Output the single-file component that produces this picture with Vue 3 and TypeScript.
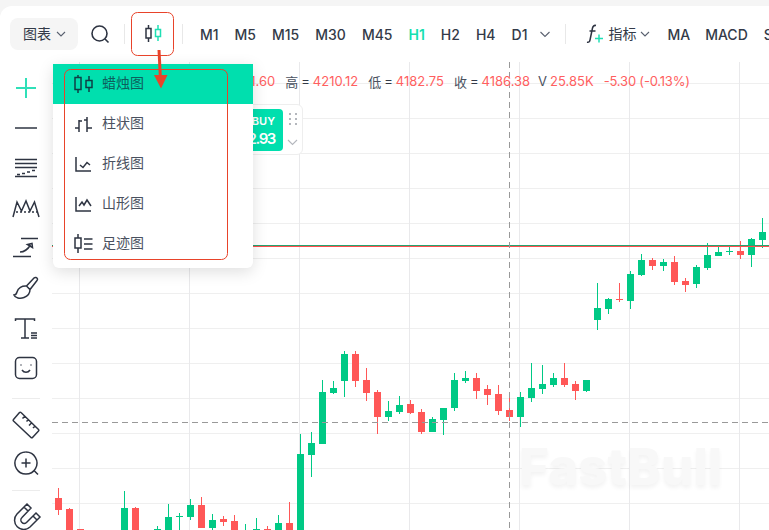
<script setup lang="ts">
type Candle = [number, 'g' | 'r', number, number, number, number]

const candles: Candle[] = [
  [58, 'r', 488, 498, 510, 515], [69, 'r', 508, 509, 531, 531], [80, 'r', 529, 529, 531, 531],
  [124, 'g', 491, 508, 531, 531], [135, 'r', 507, 508, 531, 531], [157, 'g', 526, 529, 531, 531],
  [168, 'g', 504, 517, 531, 531], [179, 'g', 513, 516, 517, 531], [190, 'g', 499, 505, 517, 520],
  [201, 'r', 497, 505, 528, 528], [212, 'g', 514, 520, 528, 531], [223, 'r', 516, 519, 522, 526],
  [234, 'r', 515, 521, 531, 531], [245, 'g', 524, 530, 531, 531], [256, 'g', 518, 529, 531, 531],
  [267, 'r', 526, 529, 531, 531], [278, 'g', 515, 523, 531, 531], [289, 'r', 502, 523, 531, 531],
  [300, 'g', 434, 454, 531, 531], [311, 'g', 432, 443, 455, 477], [322, 'g', 380, 392, 444, 444],
  [333, 'g', 381, 388, 393, 394], [344, 'g', 351, 354, 381, 397], [355, 'r', 351, 354, 381, 387],
  [366, 'r', 368, 380, 393, 401], [377, 'r', 390, 392, 417, 434], [388, 'g', 401, 411, 417, 421],
  [399, 'g', 396, 405, 412, 414], [410, 'r', 400, 404, 413, 414], [421, 'r', 409, 412, 432, 434],
  [432, 'g', 417, 419, 432, 432], [443, 'g', 408, 408, 420, 435], [454, 'g', 373, 380, 408, 411],
  [465, 'g', 371, 378, 381, 383], [476, 'r', 373, 378, 391, 399], [487, 'r', 385, 389, 395, 405],
  [498, 'r', 385, 394, 411, 415], [509, 'r', 392, 410, 417, 421], [520, 'g', 392, 397, 417, 427],
  [531, 'g', 363, 388, 398, 402], [542, 'g', 365, 384, 389, 394], [553, 'g', 373, 378, 385, 387],
  [564, 'r', 363, 378, 385, 387], [575, 'r', 381, 384, 391, 400], [586, 'g', 380, 380, 391, 392],
  [597, 'g', 283, 308, 320, 330], [608, 'g', 298, 299, 309, 314], [619, 'r', 283, 299, 300, 302],
  [630, 'g', 271, 274, 301, 309], [641, 'g', 254, 260, 275, 276], [652, 'r', 258, 260, 266, 270],
  [663, 'g', 259, 262, 266, 271], [674, 'r', 256, 262, 282, 285], [685, 'r', 278, 281, 285, 292],
  [696, 'g', 265, 267, 284, 288], [707, 'g', 243, 255, 268, 270], [718, 'g', 246, 252, 256, 256],
  [729, 'g', 247, 251, 252, 255], [740, 'r', 241, 251, 255, 259], [751, 'g', 238, 239, 255, 267],
  [762, 'g', 218, 232, 240, 248],
]

const hLines = [83, 118, 153, 188, 223, 258, 293, 328, 363, 398, 433, 468, 503]
const vLines = [79, 189, 299, 409, 519, 629, 739]

const periods = ['M1', 'M5', 'M15', 'M30', 'M45', 'H1', 'H2', 'H4', 'D1']
const active = 'H1'

const toolsA = [
  { key: 'line', d: 'M15 20H37' },
  { key: 'channel', d: 'M15 11.5H37M15 15.5H37M15 19.5H37M15 28.5H37M17 26.5H20M22 25.5H25M27 24H30M32 22.5H35' },
  { key: 'peak', d: 'M13 29L17 14L21.500 23L26 13L30 23L34.500 14L39 29M16 24H18M20 24H22M24 24H26M28 24H30M32 24H34M36 24H37' },
  { key: 'arrow', d: 'M21 10.5H38M13 28.5H31M20 24C25 24 28 21 30.500 17M27.500 16.500L32 15.500L32.500 19.500Z' },
  { key: 'brush', d: 'M36 9.5C37.5 10 38 11.5 37 12.5L30 21.5L26.5 18L34 10C34.5 9.5 35.2 9.3 36 9.5ZM26.5 18C22 17.5 18 20 17 24C16.5 26 15 27 14 27C15 30 20 31 24 29.5C28 28 30 25 30 21.5' },
  { key: 'text', d: 'M15.5 13V11H34.5V13M25 11V30M21 30H29M31 25H37M31 27.5H37M31 30H37' },
  { key: 'face', d: 'M19.5 9.5H32.5A4 4 0 0 1 36.5 13.5V26.5A4 4 0 0 1 32.5 30.5H19.5A4 4 0 0 1 15.5 26.5V13.5A4 4 0 0 1 19.5 9.5ZM21 16.5V17.5M31 16.5V17.5M22 22C24 25 28 25 30 22' },
]
const toolsB = [
  { key: 'ruler', d: 'M21 9.500L38.500 26.500A1 1 0 0 1 38.500 28L32.500 34.500A1 1 0 0 1 31 34.500L13.500 18A1 1 0 0 1 13.500 16.500L19.500 9.500A1 1 0 0 1 21 9.500ZM25 13L22.500 15.500M28.500 16.500L26.500 18.500M32 19.500L29 22.500M35 23L33 25' },
  { key: 'zoom', d: 'M26 9A11 11 0 1 1 25.9 9M34.500 28L38 31.500M21.500 20H30.500M26 15.500V24.500' },
]
const magnet = 'M27 7L17 17A9.200 9.200 0 0 0 30 30L40 20L36 16L26.500 25.500A3.200 3.200 0 0 1 22 20.500L31 11ZM24 10L28 14M37 23L33 19'

const menu = ['蜡烛图', '柱状图', '折线图', '山形图', '足迹图']
</script>

<template>
  <div class="page">
    <header class="toolbar">
      <button class="chart-select">
        <span>图表</span>
        <svg class="chev" width="10" height="6" viewBox="0 0 10 6"><path d="M1 1L5 5L9 1" /></svg>
      </button>
      <svg class="search" width="20" height="20" viewBox="0 0 20 20">
        <circle cx="9.5" cy="9.5" r="7.5" />
        <path d="M15 15L18.5 18.5" />
      </svg>
      <i class="sep sep-a"></i>
      <svg class="candle-switch" width="20" height="20" viewBox="0 0 20 20">
        <path class="dark" d="M4.500 1V4.500M4.500 14V18M2 4.500H7V14H2Z" />
        <path class="teal" d="M14 1V5.500M14 12.500V17M11.500 5.500H16.500V12.500H11.500Z" />
      </svg>
      <i class="sep sep-b"></i>
      <nav class="periods">
        <span v-for="p in periods" :key="p" :class="['period', { on: p === active }]">{{ p }}</span>
      </nav>
      <svg class="chev more" width="12" height="7" viewBox="0 0 12 7"><path d="M1.5 1L6 5.5L10.5 1" /></svg>
      <i class="sep sep-c"></i>
      <svg class="fx" width="18" height="22" viewBox="0 0 18 22">
        <path class="dark" d="M10 2.5C8 2 7 3 6.5 5L4 17C3.6 19 2.6 19.6 1 19.2M3.5 8H9.5" />
        <path class="teal" d="M9 15.5H17M13 11.5V19.5" />
      </svg>
      <span class="indicator">指标</span>
      <svg class="chev" width="10" height="6" viewBox="0 0 10 6"><path d="M1 1L5 5L9 1" /></svg>
      <span class="period ma">MA</span>
      <span class="period macd">MACD</span>
      <span class="period sar">SAR</span>
    </header>

    <main class="body">
      <aside class="side">
        <button class="tool">
          <svg width="52" height="40" viewBox="0 0 52 40"><path class="plus" d="M16 20H36M26 10V30" /></svg>
        </button>
        <button v-for="t in toolsA" :key="t.key" class="tool">
          <svg width="52" height="40" viewBox="0 0 52 40"><path :d="t.d" /></svg>
        </button>
        <i class="side-sep first"></i>
        <button v-for="t in toolsB" :key="t.key" class="tool">
          <svg width="52" height="40" viewBox="0 0 52 40"><path :d="t.d" /></svg>
        </button>
        <i class="side-sep second"></i>
        <button class="tool">
          <svg width="52" height="40" viewBox="0 0 52 40"><path :d="magnet" /></svg>
        </button>
      </aside>

      <section class="chart">
        <svg class="plot" width="717" height="468" viewBox="52 62 717 468">
          <rect v-for="y in hLines" :key="'h' + y" x="52" :y="y" width="717" height="1" fill="#efefef" />
          <rect v-for="x in vLines" :key="'v' + x" :x="x" y="62" width="1" height="468" fill="#e9e9eb" />
          <g v-for="c in candles" :key="c[0]" :fill="c[1] === 'g' ? '#00c985' : '#ff5757'">
            <rect :x="c[0]" :y="c[2]" width="1" :height="c[5] - c[2]" />
            <rect :x="c[0] - 3" :y="c[3]" width="7" :height="c[4] - c[3]" />
          </g>
          <rect x="52" y="245" width="717" height="1" fill="#25a36f" />
          <rect x="52" y="246" width="717" height="1" fill="#ff4d4d" />
          <path d="M52 422.5H769" stroke="#999" stroke-dasharray="6 4" fill="none" />
          <path d="M509.5 62V530" stroke="#999" stroke-dasharray="6 4" fill="none" />
        </svg>

        <div class="watermark">FastBull</div>

        <div class="info">
          <span class="k">开</span><span class="eq">=</span><span class="v">4211.60</span>
          <span class="k gap">高</span><span class="eq">=</span><span class="v">4210.12</span>
          <span class="k gap">低</span><span class="eq">=</span><span class="v">4182.75</span>
          <span class="k gap">收</span><span class="eq">=</span><span class="v">4186.38</span>
          <span class="k vee">V</span><span class="v vol">25.85K</span>
          <span class="v tight">-5.30 (-0.13%)</span>
        </div>

        <div class="trade">
          <div class="buy">
            <span class="buy-l">BUY</span>
            <span class="buy-p">4182.93</span>
          </div>
          <div class="trade-ctl">
            <svg width="10" height="14" viewBox="0 0 10 14" fill="#b4b7bd">
              <rect x="1" y="1" width="2" height="2" /><rect x="7" y="1" width="2" height="2" />
              <rect x="1" y="6" width="2" height="2" /><rect x="7" y="6" width="2" height="2" />
              <rect x="1" y="11" width="2" height="2" /><rect x="7" y="11" width="2" height="2" />
            </svg>
            <svg class="chev pale" width="11" height="7" viewBox="0 0 11 7"><path d="M1 1L5.5 5.5L10 1" /></svg>
          </div>
        </div>

        <ul class="menu">
          <li v-for="(m, i) in menu" :key="m" :class="['menu-item', { sel: i === 0 }]">
            <svg width="20" height="20" viewBox="0 0 20 20">
              <path v-if="i === 0" d="M5 1V3.500M5 15.500V19M2 3.500H8V15.500H2ZM16 2V6.500M16 13.500V18M13 6.500H19V13.500H13Z" />
              <path v-else-if="i === 1" d="M6 6V18M2 14H6M6 7H9M14 3V18M11 6H14M14 14H19" />
              <path v-else-if="i === 2" d="M3 3V17H18M7 11L10 13.500L14 8.500L17 11" />
              <path v-else-if="i === 3" d="M3 3V17H18M6 12L9 8L11 11L14 6L18 12" />
              <path v-else d="M5 0V4M5 14V19M2 4H8V14H2ZM11 5H19.500M11 10H19.500M11 15H19.500" />
            </svg>
            <span>{{ m }}</span>
          </li>
        </ul>
      </section>
    </main>

    <svg class="notes" width="769" height="530" viewBox="0 0 769 530">
      <rect x="131.5" y="12.5" width="42" height="43" rx="6" />
      <rect x="64.5" y="69.5" width="163" height="190" rx="6" />
      <path class="shaft" d="M159 50L160.500 80" />
      <path class="head" d="M154 75L167.500 75L161 88.500Z" />
    </svg>
  </div>
</template>

<style>
html, body { margin: 0; background: #f5f5f5; }
</style>

<style scoped>
.page {
  position: relative;
  width: 769px;
  height: 530px;
  overflow: hidden;
  padding-top: 6px;
  box-sizing: border-box;
  font-family: Inter, "Noto Sans CJK SC", sans-serif;
  color: #333a48;
}
button { all: unset; box-sizing: border-box; }
svg { display: block; flex: none; }
svg path, svg circle { fill: none; }

.toolbar {
  display: flex;
  align-items: center;
  height: 56px;
  padding: 0 0 0 10px;
  box-sizing: border-box;
  background: #fff;
  border-radius: 12px 0 0 0;
  overflow: hidden;
  white-space: nowrap;
}
.chart-select {
  display: flex;
  align-items: center;
  gap: 5px;
  width: 68px;
  height: 32px;
  padding-left: 13px;
  background: #f5f5f5;
  border-radius: 8px;
  font-size: 14px;
  flex: none;
}
.chart-select span { margin-bottom: 2px; }
.chev path { stroke: #5a6170; stroke-width: 1.1; }
.chev.pale path { stroke: #b4b7bd; }
.search { margin-left: 12px; }
.search circle, .search path { stroke: #2e3442; stroke-width: 1.6; }
.sep { display: block; flex: none; width: 1px; height: 20px; background: #e8e8e8; }
.sep-a { margin-left: 14px; }
.candle-switch { margin-left: 19px; }
.sep-b { margin-left: 18px; }
.dark { stroke: #2e3442; stroke-width: 1.5; }
.teal { stroke: #1fdfb4; stroke-width: 1.5; }
.periods { display: flex; gap: 16px; margin-left: 17px; flex: none; }
.period { font-size: 14px; font-weight: 500; color: #333a48; }
.period.on { color: #17dfb0; font-weight: 600; }
.more { margin-left: 12px; }
.sep-c { margin-left: 14px; }
.fx { margin-left: 20px; }
.indicator { margin-left: 4px; margin-right: 4px; margin-bottom: 2px; font-size: 14px; }
.ma { margin-left: 17px; }
.macd { margin-left: 15px; }
.sar { margin-left: 16px; }

.body { display: flex; height: 468px; background: #fff; }
.side {
  display: flex;
  flex-direction: column;
  flex: none;
  width: 52px;
  padding-top: 6px;
  box-sizing: border-box;
  overflow: hidden;
}
.tool { display: block; flex: none; height: 40px; }
.tool path { stroke: #2e3442; stroke-width: 1.5; }
.tool path.plus { stroke: #2fe0b8; stroke-width: 2; }
.side-sep { display: block; flex: none; width: 28px; height: 1px; margin-left: 12px; background: #ececec; }
.side-sep.first { margin-top: 10px; margin-bottom: 4px; }
.side-sep.second { margin-top: 7px; margin-bottom: 6px; }

.chart { position: relative; flex: 1; min-width: 0; overflow: visible; }
.plot { position: absolute; left: 0; top: 0; }
.watermark {
  position: absolute;
  left: 467px;
  top: 375px;
  font-size: 51px;
  font-weight: 800;
  line-height: 60px;
  color: #f8f8f8;
  text-shadow: 0 3px 4px rgba(0, 0, 0, .05);
}
.info {
  position: absolute;
  left: 149px;
  top: 11px;
  display: flex;
  align-items: center;
  height: 16px;
  font-size: 13px;
  white-space: nowrap;
}
.k { color: #4a5160; }
.eq { margin: 0 3px; color: #333a48; }
.v { color: #ff5f5f; }
.gap { margin-left: 10px; }
.vee { margin-left: 8px; }
.vol { margin-left: 3px; }
.tight { margin-left: 10px; letter-spacing: -.2px; }

.trade {
  position: absolute;
  left: 130px;
  top: 42px;
  display: flex;
  width: 121px;
  height: 51px;
  box-sizing: border-box;
  padding: 4px 0 3px 4px;
  background: #fff;
  border: 1px solid #eee;
  border-radius: 6px;
}
.buy {
  display: flex;
  flex: none;
  flex-direction: column;
  align-items: flex-end;
  justify-content: center;
  width: 96px;
  padding-right: 8px;
  box-sizing: border-box;
  background: #00dfae;
  border-radius: 0 4px 4px 0;
  color: #fff;
  font-weight: 600;
  line-height: 18px;
}
.buy-l { font-size: 11px; }
.buy-p { font-size: 15px; letter-spacing: -1.4px; }
.trade-ctl { display: flex; flex-direction: column; align-items: center; gap: 13px; flex: 1; padding-top: 3px; }

.menu {
  position: absolute;
  left: 1px;
  top: 2px;
  width: 200px;
  margin: 0;
  padding: 0 0 4px;
  list-style: none;
  background: #fff;
  border-radius: 0 0 6px 6px;
  box-shadow: 0 4px 16px rgba(0, 0, 0, .13);
}
.menu-item {
  display: flex;
  align-items: center;
  gap: 9px;
  height: 40px;
  padding-left: 20px;
  font-size: 14px;
  color: #4a5160;
}
.menu-item span { margin-bottom: 4px; }
.menu-item path { stroke: #2e3442; stroke-width: 1.5; }
.menu-item.sel { background: #00dfae; color: #0d5f5c; }
.menu-item.sel path { stroke: #0f3f45; }

.notes { position: absolute; left: 0; top: 0; pointer-events: none; }
.notes rect { fill: none; stroke: #e8432a; stroke-width: 1; }
.notes .shaft { stroke: #e8432a; stroke-width: 3; }
.notes .head { fill: #e8432a; }
</style>
